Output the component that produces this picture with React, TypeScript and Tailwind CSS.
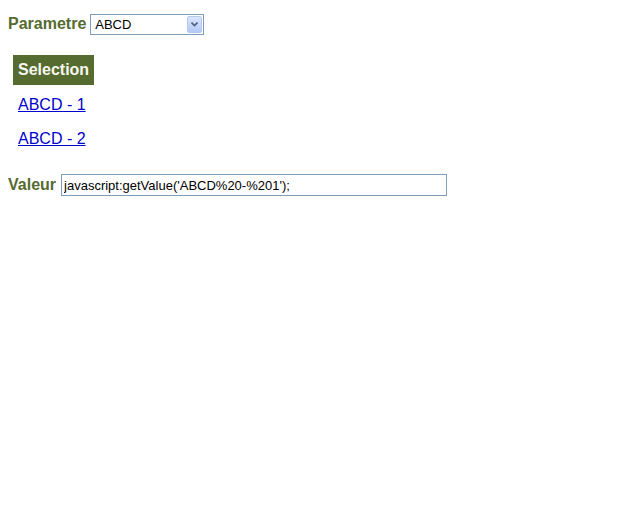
import { type JSX } from "react"

function XpSelect({ value }: { value: string }): JSX.Element {
    return (
        <div className="flex h-[21px] w-[114px] items-stretch border border-[#7f9db9] bg-white">
            <span className="flex-1 pl-[4px] text-[13px] leading-[19px] text-black">{value}</span>
            <span className="m-[1px] flex w-[15px] items-center justify-center rounded-[2px] border border-[#b6c9f0] bg-gradient-to-b from-[#dbe6fd] to-[#b4c8f5]">
                <svg width="7" height="5" viewBox="0 0 7 5">
                    <path d="M0.5 0.5 L3.5 3.5 L6.5 0.5" fill="none" stroke="#4d6185" strokeWidth="1.6" />
                </svg>
            </span>
        </div>
    )
}

export default function App(): JSX.Element {
    const links = ["ABCD - 1", "ABCD - 2"]

    return (
        <div className="min-h-[512px] bg-white px-2 font-['Liberation_Sans',Arial,sans-serif]">
            <div className="flex items-center gap-[4px] pt-[12px]">
                <span className="text-[16px] font-bold text-[#556b2f]">Parametre</span>
                <XpSelect value="ABCD" />
            </div>

            <div className="ml-[5px] mt-[19px] flex w-[81px] flex-col">
                <div className="mb-[3px] flex h-[30px] items-center bg-[#556b2f] px-[5px] text-[16px] font-bold text-[#f8f8f0]">Selection</div>
                {links.map((l) => (
                    <a key={l} href="#" className="flex h-[34px] items-center px-[5px] text-[16px] text-[#0000cc] underline">{l}</a>
                ))}
            </div>

            <div className="mt-[17px] flex items-center gap-[5px]">
                <span className="text-[16px] font-bold text-[#556b2f]">Valeur</span>
                <input
                    readOnly
                    value="javascript:getValue('ABCD%20-%201');"
                    className="h-[22px] w-[386px] border border-[#7f9db9] px-[2px] text-[13px] text-black outline-none"
                />
            </div>
        </div>
    )
}
